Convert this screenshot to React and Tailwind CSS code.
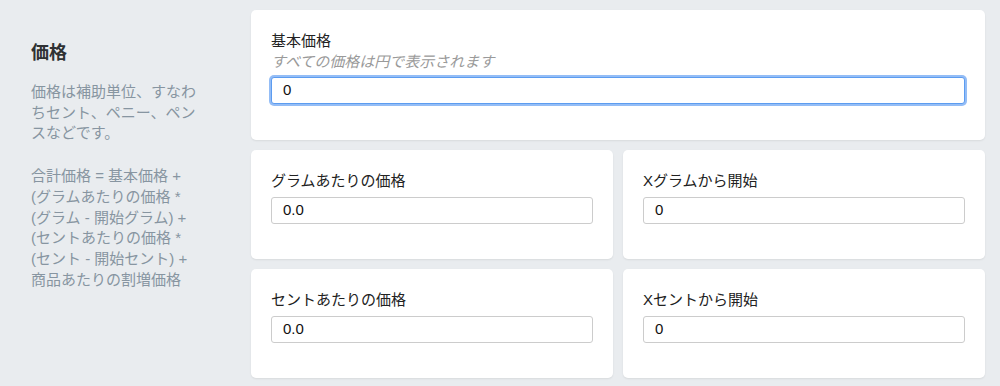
import React from "react";

const font = { fontFamily: '"Liberation Sans", "Noto Sans CJK JP", sans-serif' };

function Field({ label, value }) {
  return (
    <div>
      <div className="text-[15px] leading-[21px] text-[#222]">{label}</div>
      <div className="mt-[6px] h-[27px] flex items-center pl-[11px] text-[15px] text-[#111] bg-white rounded-[3px] border border-[#cccccc]">
        {value}
      </div>
    </div>
  );
}

function Card({ children, className = "" }) {
  return (
    <div
      className={
        "bg-white rounded-[5px] shadow-[0_1px_2px_rgba(0,0,0,0.08)] px-[20px] pt-[20px] " +
        className
      }
    >
      {children}
    </div>
  );
}

export default function App() {
  return (
    <div className="w-[1000px] h-[386px] bg-[#e9ecef] flex overflow-hidden" style={font}>
      <div className="w-[251px] shrink-0 pl-[31px] pt-[40px]">
        <h2 className="text-[18px] leading-[27px] font-bold text-[#2f3133]">価格</h2>
        <div className="mt-[15px] w-[172px] text-[15px] leading-[20.7px] text-[#8795a1]">
          <p>価格は補助単位、すなわちセント、ペニー、ペンスなどです。</p>
          <p className="mt-[22px]">
            合計価格 = 基本価格 + (グラムあたりの価格 * (グラム - 開始グラム) + (セントあたりの価格 * (セント - 開始セント) + 商品あたりの割増価格
          </p>
        </div>
      </div>
      <div className="w-[734px] pt-[10px] flex flex-col gap-[10px]">
        <Card className="pb-[36px]">
          <div>
            <div className="text-[15px] leading-[21px] text-[#222]">基本価格</div>
            <div className="text-[15px] leading-[21px] italic text-[#9a9a9a]">
              すべての価格は円で表示されます
            </div>
            <div className="mt-[5px] h-[27px] flex items-center pl-[11px] text-[15px] text-[#111] bg-white rounded-[3px] border border-[#5c9cf0] shadow-[0_0_0_2px_#94bdf6]">
              0
            </div>
          </div>
        </Card>
        <div className="grid grid-cols-2 gap-[10px]">
          <Card className="pb-[35px]">
            <Field label="グラムあたりの価格" value="0.0" />
          </Card>
          <Card className="pb-[35px]">
            <Field label="Xグラムから開始" value="0" />
          </Card>
        </div>
        <div className="grid grid-cols-2 gap-[10px]">
          <Card className="pb-[35px]">
            <Field label="セントあたりの価格" value="0.0" />
          </Card>
          <Card className="pb-[35px]">
            <Field label="Xセントから開始" value="0" />
          </Card>
        </div>
      </div>
    </div>
  );
}
